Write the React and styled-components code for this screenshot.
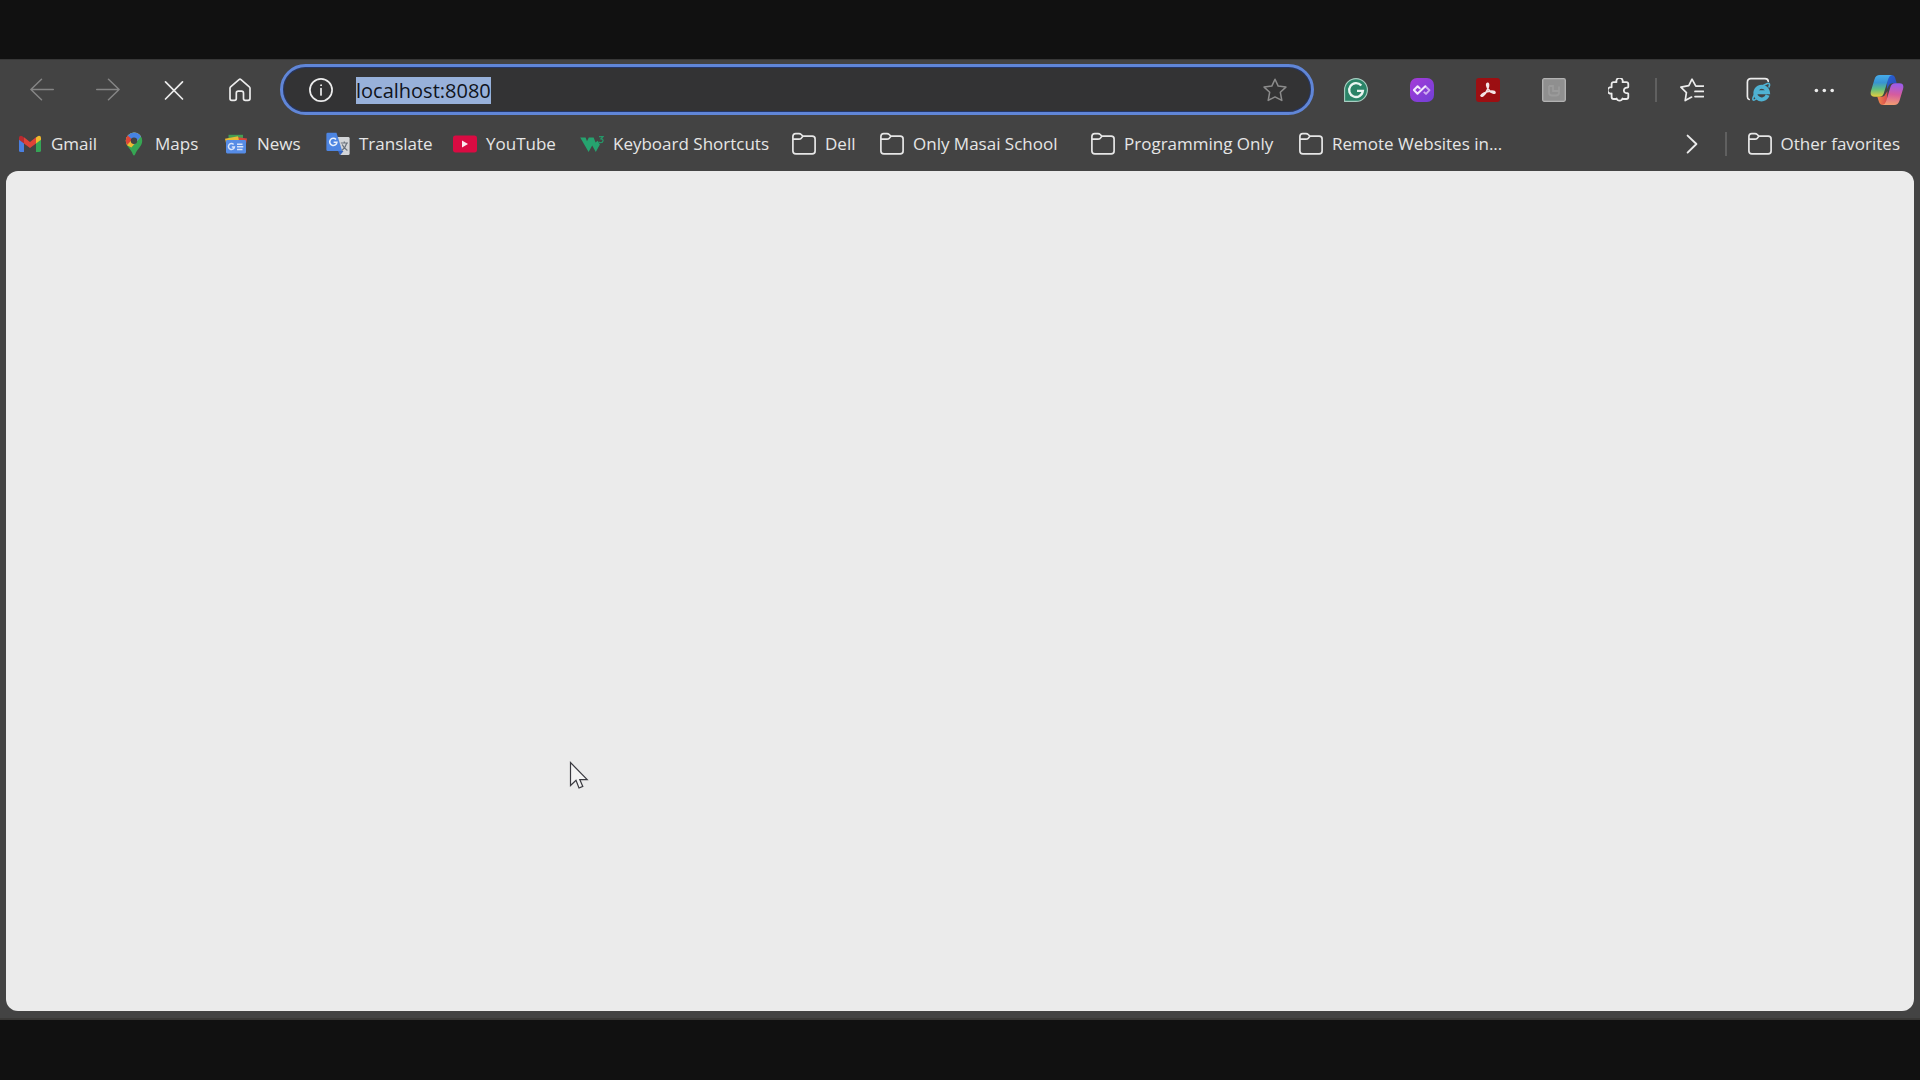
import React, { useEffect, useRef } from "react";
import styled, { createGlobalStyle } from "styled-components";

const GlobalStyle = createGlobalStyle`
  * { box-sizing: border-box; }
  body {
    margin: 0;
    background: #111111;
    font-family: "Open Sans", "Noto Sans", sans-serif;
    color: #e8e8e8;
  }
`;

const Screen = styled.div`
  display: flex;
  flex-direction: column;
  min-height: 100vh;
  padding: 59px 0 60px;
`;

const Browser = styled.div`
  flex: 1;
  display: flex;
  flex-direction: column;
  background: #434343;
  border-top: 1px solid #383838;
  border-bottom: 2px solid #393836;
`;

const Toolbar = styled.header`
  display: flex;
  align-items: center;
  padding: 4px 3px 1px 9px;
`;

const ButtonGroup = styled.div`
  display: flex;
  align-items: center;
`;

const ToolButton = styled.button`
  display: flex;
  align-items: center;
  justify-content: center;
  width: ${(p) => (p.$narrow ? 60 : 66)}px;
  height: 51px;
  padding: 0;
  border: 0;
  background: none;
  color: ${(p) => (p.disabled ? "#858585" : "#ececec")};
`;

const Divider = styled.span`
  width: 2px;
  height: 24px;
  margin: 0 ${(p) => p.$space}px;
  background: #606060;
`;

const AddressBar = styled.div`
  flex: 1;
  display: flex;
  align-items: center;
  height: 51px;
  margin: 0 9px 0 7px;
  padding-left: 24px;
  border: 3px solid #6086d8;
  border-radius: 26px;
  background: #333334;
  box-shadow: inset 0 0 0 1px #24376a;
`;

const IconButton = styled.button`
  display: flex;
  align-items: center;
  justify-content: center;
  width: ${(p) => p.$size}px;
  height: 36px;
  padding: 0;
  border: 0;
  background: none;
  color: ${(p) => (p.$dim ? "#8c8c8c" : "#ececec")};
`;

const AddressInput = styled.input`
  flex: 1;
  min-width: 0;
  height: 36px;
  margin-left: 21px;
  padding: 2px 0 0;
  border: 0;
  outline: 0;
  background: none;
  color: #e8e8e8;
  font: 20px/34px "Open Sans", "Noto Sans", sans-serif;
  &::selection {
    background: #98b1da;
    color: #10141c;
  }
`;

const BookmarkBar = styled.nav`
  display: flex;
  align-items: center;
  height: 55px;
  padding: 0 20px 0 18px;
`;

const BookmarkList = styled.ul`
  flex: 1;
  display: flex;
  margin: 0;
  padding: 0;
  list-style: none;
`;

const BookmarkItem = styled.li`
  flex: 0 0 ${(p) => p.$width}px;
`;

const Bookmark = styled.a`
  display: flex;
  align-items: center;
  gap: 9px;
  color: #e6e6e6;
  font-size: 17px;
  line-height: 24px;
  text-decoration: none;
  white-space: nowrap;
  svg { flex: none; }
`;

const Page = styled.main`
  flex: 1;
  margin: 0 6px 7px;
  border-radius: 12px;
  background: #ebebeb;
`;

const Pointer = styled.svg`
  position: absolute;
  left: 569px;
  top: 761px;
`;

const Line = ({ size = 24, width = 1.7, children }) => (
  <svg width={size} height={size} viewBox={`0 0 ${size} ${size}`} fill="none" stroke="currentColor"
    strokeWidth={width} strokeLinecap="round" strokeLinejoin="round" aria-hidden="true">
    {children}
  </svg>
);

const Art = ({ size = 24, children }) => (
  <svg width={size} height={size} viewBox={`0 0 ${size} ${size}`} aria-hidden="true">{children}</svg>
);

const BackIcon = () => <Line width={1.5}><path d="M23.3 11.5H.9M11.5 1.3.9 11.5l10.6 10.2" /></Line>;
const ForwardIcon = () => <Line width={1.5}><path d="M.7 11.5h22.4M12.5 1.3l10.6 10.2-10.6 10.2" /></Line>;
const StopIcon = () => <Line><path d="M3.5 3.8l17 17.2M20.5 3.8l-17 17.2" /></Line>;
const HomeIcon = () => (
  <Line>
    <path d="M12 1.2Q11.5 1.2 11 1.6L2.6 8.8Q2 9.4 2 10.2v10.3q0 1.8 1.8 1.8h2.7q1.8 0 1.8-1.8v-5.3q0-2 2-2h3.2q2 0 2 2v5.3q0 1.8 1.8 1.8H20q2 0 2-1.8V10.2q0-.8-.7-1.4L13 1.6q-.5-.4-1-.4Z" />
  </Line>
);
const InfoIcon = () => (
  <Line>
    <circle cx="12" cy="12" r="11.1" />
    <path d="M12 10.6v6.4" />
    <circle cx="12" cy="7.2" r=".5" fill="currentColor" strokeWidth="1" />
  </Line>
);
const StarIcon = () => (
  <Line width={1.5}><path d="M12 1.2l3.2 6.9 7.7 1-5.6 5.1 1.5 8.2L12 18.9l-6.8 3.5 1.5-8.2L1.1 9.1l7.7-1Z" /></Line>
);
const GrammarlyIcon = () => (
  <Art>
    <path d="M.6 23.4V12A11.4 11.4 0 1 1 12 23.4Z" fill="#2b8468" stroke="#a9cfc3" strokeWidth="1.1" />
    <path d="M17.3 7.6A6.9 6.9 0 1 0 18.9 12.9H13" fill="none" stroke="#eaf5f1" strokeWidth="2.3" />
  </Art>
);
const LoopIcon = () => (
  <Art>
    <defs>
      <linearGradient id="loop" x1="0" y1="0" x2="1" y2="1">
        <stop offset="0" stopColor="#a63bd8" /><stop offset="1" stopColor="#7040d6" />
      </linearGradient>
    </defs>
    <rect width="24" height="24" rx="7" fill="url(#loop)" />
    <path d="M15.3 8.2l4.2 4-3.5 3.7-2.2-2" fill="none" stroke="#cfaef0" strokeWidth="1.9" strokeLinejoin="round" />
    <path d="M9.7 10.2 7.6 8.2 3.9 12l3.6 3.8 7.8-7.6" fill="none" stroke="#f3e8fc" strokeWidth="2" strokeLinejoin="round" strokeLinecap="round" />
  </Art>
);
const AcrobatIcon = () => (
  <Art>
    <rect width="24" height="24" rx="3" fill="#9c0f12" />
    <path d="M5 17.6c1.2-2 4.4-3.5 7.8-4.1 3.4-.6 6 0 6.2 1.1.1 1.3-3.4.6-6-2.5-2.2-2.6-3-6.5-1.5-6.7 1.8-.2 1 4.7-1 8.1-1.8 3.2-4.5 5.7-5.5 4.1Z" fill="none" stroke="#f3e6e6" strokeWidth="1.7" strokeLinejoin="round" />
  </Art>
);
const GreyExtensionIcon = () => (
  <Art>
    <rect x=".7" y=".7" width="22.6" height="22.6" rx="1.5" fill="#8f8f8f" stroke="#b3b3b3" strokeWidth="1.3" />
    <path d="M7 8v6.5q0 3 3 3h4q3 0 3-3V8.5M7 8h4v5h6" fill="none" stroke="#9b9b9b" strokeWidth="1.8" />
  </Art>
);
const PuzzleIcon = () => (
  <Line width={1.8}>
    <path d="M8.5 4.1A3.2 3.2 0 1 1 14.6 4.1H18.3Q20.3 4.1 20.3 6.1V8.8A.9.9 0 0 1 19.4 9.7A2.8 2.8 0 1 0 19.4 15.1A.9.9 0 0 1 20.3 16V19Q20.3 21 18.3 21H15.4A.9.9 0 0 1 14.5 20.5A3.1 3.1 0 0 1 8.6 20.5A.9.9 0 0 1 7.7 21H5.6Q3.6 21 3.6 19V15.5A3.2 3.2 0 1 1 3.6 9.3V6.1Q3.6 4.1 5.6 4.1Z" />
  </Line>
);
const FavoritesIcon = () => (
  <Line>
    <path d="M15.8 8.1 12 1.2 8.8 7.7.9 9.1 6.4 14.6 5.2 22.6 11.6 19.1M16 8.1h7.5M15 13.4h8.5M15 18.6h8.5" />
  </Line>
);
const IeModeIcon = () => (
  <Art size={26}>
    <path d="M4.2 22.5Q2.4 22 2.4 19.5V5.2Q2.4 1.7 5.9 1.7H20Q23 1.7 23.2 4.2" fill="none" stroke="#ececec" strokeWidth="1.7" strokeLinecap="round" />
    <path d="M22.6 18.2A6.3 6.3 0 1 1 22.9 15.2H11" fill="none" stroke="#4fb2d2" strokeWidth="4" />
    <path d="M11 22c-2 1.6-4.2 1.8-2.6-2.2 2-5.2 8.6-11.6 13.9-13.3 2.3-.5 2.9.7 1.7 3.4" fill="none" stroke="#4fb2d2" strokeWidth="1.6" strokeLinecap="round" />
  </Art>
);
const MoreIcon = () => (
  <Art><g fill="#ececec"><circle cx="4.4" cy="12.5" r="1.8" /><circle cx="12.3" cy="12.5" r="1.8" /><circle cx="20.2" cy="12.5" r="1.8" /></g></Art>
);
const CopilotIcon = () => (
  <Art size={34}>
    <defs>
      <linearGradient id="cpA" x1="0" y1="0" x2="0" y2="1">
        <stop offset="0" stopColor="#46acea" /><stop offset=".35" stopColor="#3893d2" /><stop offset=".65" stopColor="#5fbd80" /><stop offset="1" stopColor="#e8cf3c" />
      </linearGradient>
      <linearGradient id="cpB" x1=".4" y1="0" x2=".3" y2="1">
        <stop offset="0" stopColor="#9a5cec" /><stop offset=".5" stopColor="#d65c9e" /><stop offset="1" stopColor="#f3a070" />
      </linearGradient>
      <linearGradient id="cpC" x1="0" y1="0" x2="1" y2="1">
        <stop offset="0" stopColor="#2a63d4" /><stop offset="1" stopColor="#274bb8" />
      </linearGradient>
      <linearGradient id="cpD" x1="0" y1="0" x2="1" y2="0">
        <stop offset="0" stopColor="#ef8a4c" /><stop offset="1" stopColor="#d9484e" />
      </linearGradient>
    </defs>
    <path d="M17.5 2H21.5Q24.3 2 25.2 5L26.7 10.2H22.2Q19.5 10.2 18.6 13L17 16Z" fill="url(#cpC)" />
    <path d="M16.5 32H12.8Q10 32 9 29L7.3 23.8H12Q14.6 23.8 15.5 21L17.5 18Z" fill="url(#cpD)" />
    <path d="M9.8 2H22Q19.4 2.4 18.4 5.4L13.8 20.2Q12.7 23.8 9.3 23.8H4.6Q-.4 23.8.9 18.3L4.5 6.2Q5.8 2 9.8 2Z" fill="url(#cpA)" />
    <path d="M24.2 32H12.5Q15 31.6 16 28.6L20.5 13.8Q21.6 10.2 25 10.2H29.4Q34.4 10.2 33.1 15.7L29.5 27.8Q28.2 32 24.2 32Z" fill="url(#cpB)" />
  </Art>
);

const GmailIcon = () => (
  <Art>
    <path d="M1 6.5V18.4Q1 20 2.6 20H6V10.4Z" fill="#4a7fe0" />
    <path d="M18 10.4V20h3.4Q23 20 23 18.4V6.5Z" fill="#35a456" />
    <path d="M18 5.5 18 11.5 23 7.7V6.1Q23 3.8 21 3.8q-1 0-3 1.7Z" fill="#f0b92d" />
    <path d="M6 5.5V11.5L1 7.7V6.1Q1 3.8 3 3.8q1 0 3 1.7Z" fill="#b92b30" />
    <path d="M6 5.3 12 10l6-4.7v6.2L12 16.1 6 11.5Z" fill="#df4337" />
  </Art>
);
const MapsIcon = () => (
  <Art>
    <path d="M12 .6A8.3 8.3 0 0 1 20.2 8.8C20.2 14.5 15.2 16.5 13.2 22.3Q12 24.8 10.8 22.3C8.8 16.5 3.8 14.5 3.8 8.8A8.3 8.3 0 0 1 12 .6Z" fill="#36a653" />
    <path d="M12 .6Q16.5 .8 19 4.4L9.4 15.6 5.4 13.6Q3.8 11.5 3.8 8.8A8.3 8.3 0 0 1 12 .6Z" fill="#efba31" />
    <path d="M12 .6Q16.5.8 19 4.4L12 12.4 5.6 3.8Q8.3.6 12 .6Z" fill="#4682e2" />
    <path d="M5.6 3.6 10.2 7.5 5 13Q3.8 11 3.8 8.8 3.8 5.9 5.6 3.6Z" fill="#dc4438" />
    <circle cx="12" cy="8.8" r="3.2" fill="#434343" />
  </Art>
);
const NewsIcon = () => (
  <Art>
    <path d="M4.5 2.8H19V12H4.5Z" fill="#459e52" />
    <path d="M14 5.3 23 6.5 21.5 15H14Z" fill="#d7463b" />
    <path d="M1 6.8 14 4.2 16 13H2.5Z" fill="#e9bb36" />
    <rect x="2" y="8" width="20" height="13.4" rx="1.3" fill="#568ce6" />
    <path d="M9.6 12.4A3 3 0 1 0 10.4 15H7.8M13 12.2h5.5M13 14.8h6.3M13 17.4h5.5" fill="none" stroke="#d8e4fa" strokeWidth="1.5" />
  </Art>
);
const TranslateIcon = () => (
  <Art>
    <path d="M10 5H22.3Q23.6 5 23.6 6.3V21.7Q23.6 23 22.3 23H14Z" fill="#d3d5d8" />
    <path d="M12 19H17.5L14.2 23.2Z" fill="#3563c0" />
    <path d="M1.7.8H10.5L16.2 19H1.7Q.4 19 .4 17.7V2.1Q.4.8 1.7.8Z" fill="#4d85e2" />
    <path d="M10 7.5A3.6 3.6 0 1 0 10.9 10.2H7.6" fill="none" stroke="#e7effb" strokeWidth="1.6" />
    <path d="M14.8 11H22M18.3 9.6V11M20.8 11Q19.6 15.6 15.8 18.4M16.2 12.6Q17.6 16 21.4 18.6" fill="none" stroke="#6b737d" strokeWidth="1.2" />
  </Art>
);
const YoutubeIcon = () => (
  <Art>
    <rect y="3.6" width="24" height="16.8" rx="2.6" fill="#d90b42" />
    <path d="M9 8.6v6.8l6-3.4Z" fill="#fbe9ee" />
  </Art>
);
const W3Icon = () => (
  <Art>
    <path d="M.2 5.4H5.6L7 9.2 8.8 5.4H13.6L15.6 10.4 17.6 8.8 19.9 12.6 15.8 20 12.2 13.6 8.6 20Z" fill="#26a36f" />
    <path d="M19 4.6h4l-2 2.2q2.2.2 2 2-.3 2-2.4 1.9-1.4-.1-1.8-1" fill="none" stroke="#269768" strokeWidth="1.3" />
  </Art>
);
const FolderIcon = () => (
  <Line>
    <path d="M.9 7.8V4.4Q.9 1.6 3.7 1.6H7Q8.3 1.6 9.2 2.5L10.8 4.1H20.2Q23.1 4.1 23.1 7V18.9Q23.1 21.8 20.2 21.8H3.8Q.9 21.8.9 18.9ZM.9 7.2H7Q8.3 7.2 9.2 6.3L11 4.2" />
  </Line>
);
const ChevronIcon = () => <Line width={1.9}><path d="M7.6 3.6 16.4 12l-8.8 8.6" /></Line>;

const bookmarks = [
  { name: "Gmail", Icon: GmailIcon, width: 104 },
  { name: "Maps", Icon: MapsIcon, width: 102 },
  { name: "News", Icon: NewsIcon, width: 102 },
  { name: "Translate", Icon: TranslateIcon, width: 127 },
  { name: "YouTube", Icon: YoutubeIcon, width: 127 },
  { name: "Keyboard Shortcuts", Icon: W3Icon, width: 212 },
  { name: "Dell", Icon: FolderIcon, width: 88 },
  { name: "Only Masai School", Icon: FolderIcon, width: 211 },
  { name: "Programming Only", Icon: FolderIcon, width: 208 },
  { name: "Remote Websites in...", Icon: FolderIcon, width: 211 },
];

export default function App() {
  const address = useRef(null);

  useEffect(() => {
    address.current.focus();
    address.current.select();
  }, []);

  return (
    <>
      <GlobalStyle />
      <Screen>
        <Browser>
          <Toolbar>
            <ButtonGroup>
              <ToolButton aria-label="Back" disabled><BackIcon /></ToolButton>
              <ToolButton aria-label="Forward" disabled><ForwardIcon /></ToolButton>
              <ToolButton aria-label="Stop"><StopIcon /></ToolButton>
              <ToolButton aria-label="Home"><HomeIcon /></ToolButton>
            </ButtonGroup>
            <AddressBar>
              <IconButton $size={28} aria-label="Site information"><InfoIcon /></IconButton>
              <AddressInput ref={address} aria-label="Address" defaultValue="localhost:8080" spellCheck={false} />
              <IconButton $size={72} $dim aria-label="Add to favorites"><StarIcon /></IconButton>
            </AddressBar>
            <ButtonGroup>
              <ToolButton aria-label="Grammarly"><GrammarlyIcon /></ToolButton>
              <ToolButton aria-label="Loop extension"><LoopIcon /></ToolButton>
              <ToolButton aria-label="Adobe Acrobat"><AcrobatIcon /></ToolButton>
              <ToolButton aria-label="Disabled extension"><GreyExtensionIcon /></ToolButton>
              <ToolButton aria-label="Extensions"><PuzzleIcon /></ToolButton>
              <Divider $space={2} />
              <ToolButton aria-label="Favorites"><FavoritesIcon /></ToolButton>
              <ToolButton aria-label="Internet Explorer mode"><IeModeIcon /></ToolButton>
              <ToolButton aria-label="Settings and more"><MoreIcon /></ToolButton>
              <ToolButton $narrow aria-label="Copilot"><CopilotIcon /></ToolButton>
            </ButtonGroup>
          </Toolbar>
          <BookmarkBar aria-label="Favorites bar">
            <BookmarkList>
              {bookmarks.map(({ name, Icon, width }) => (
                <BookmarkItem key={name} $width={width}>
                  <Bookmark href="#"><Icon />{name}</Bookmark>
                </BookmarkItem>
              ))}
            </BookmarkList>
            <IconButton $size={24} aria-label="More favorites"><ChevronIcon /></IconButton>
            <Divider $space={21} />
            <Bookmark href="#"><FolderIcon />Other favorites</Bookmark>
          </BookmarkBar>
          <Page />
        </Browser>
      </Screen>
      <Pointer width="20" height="30" viewBox="0 0 20 30" aria-hidden="true">
        <path d="M1.5 1.5V24.5L7 19.2 10 27 13.8 25.4 10.8 18.6H18.2Z" fill="#f4f4f4" stroke="#3a3a40" strokeWidth="1.2" />
      </Pointer>
    </>
  );
}
